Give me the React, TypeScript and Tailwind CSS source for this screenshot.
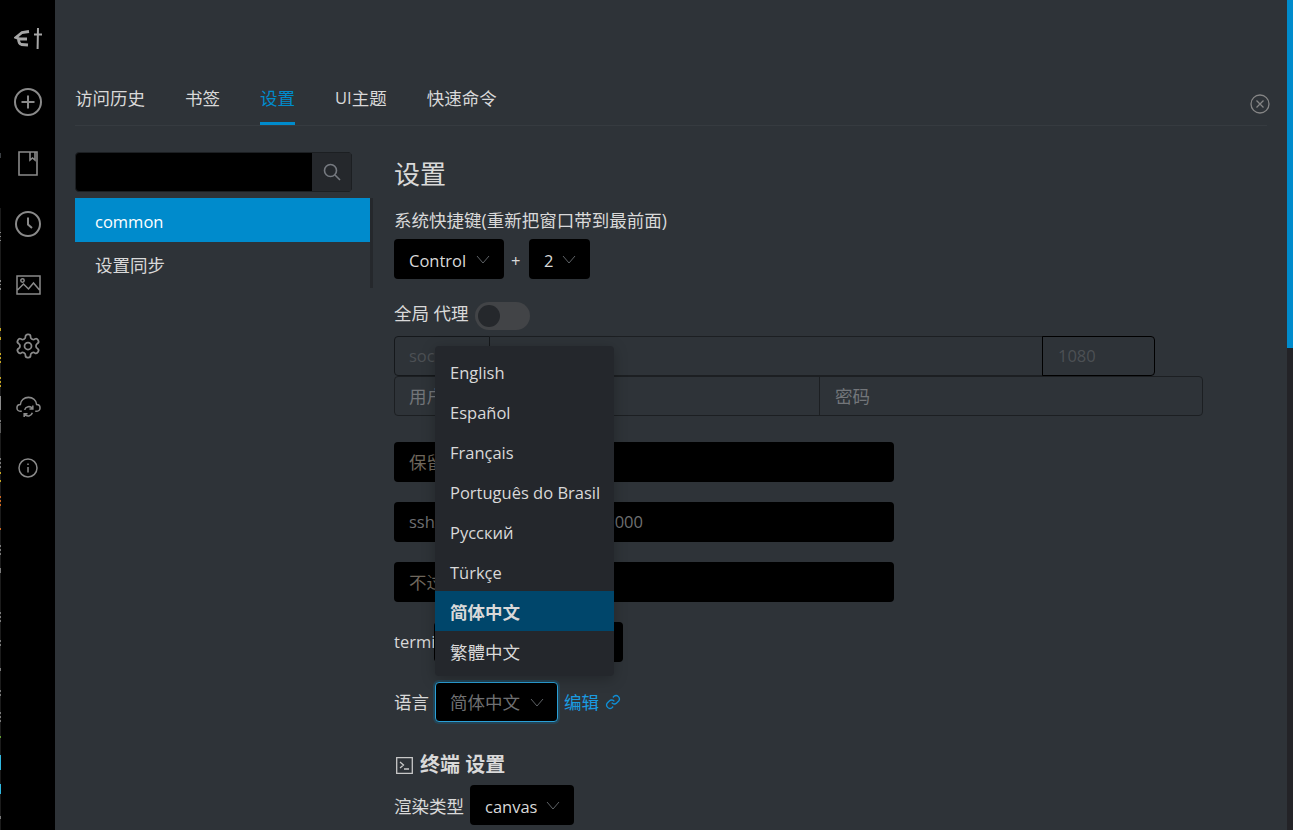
import React from "react";

const Chev = ({ c = "#5e6266" }: { c?: string }) => (
  <svg width="14" height="9" viewBox="0 0 14 9" fill="none" stroke={c} strokeWidth="1"><path d="M1 1l6 7 6-7" /></svg>
);

const ticks: [number, number, string][] = [
  [153, 5, "#3a3e42"], [208, 622, "#1b1b1b"], [232, 1, "#8a8a8a"], [236, 1, "#8a8a8a"], [240, 1, "#8a8a8a"],
  [280, 2, "#8a8a8a"], [284, 1, "#8a8a8a"], [288, 2, "#8a8a8a"], [328, 3, "#c8a820"], [337, 3, "#c8a820"],
  [353, 2, "#c8a820"], [357, 2, "#c8a820"], [361, 2, "#c8a820"], [377, 2, "#c8a820"], [381, 2, "#c8a820"], [385, 2, "#c8a820"],
  [396, 14, "#8a8a8a"], [420, 2, "#7a7a7a"], [423, 10, "#5a5a5a"], [458, 2, "#7a7a7a"], [462, 2, "#7a7a7a"], [466, 2, "#7a7a7a"],
  [472, 2, "#c8a820"], [480, 2, "#c8a820"], [496, 2, "#d06820"], [500, 2, "#d06820"], [504, 2, "#d06820"], [528, 2, "#d06820"],
  [545, 2, "#7a7a7a"], [549, 2, "#7a7a7a"], [553, 2, "#7a7a7a"], [568, 5, "#7a7a7a"], [612, 2, "#7a7a7a"], [616, 2, "#7a7a7a"], [620, 2, "#7a7a7a"],
  [640, 2, "#7a7a7a"], [644, 2, "#7a7a7a"], [668, 3, "#7a7a7a"], [690, 2, "#7a7a7a"], [694, 2, "#7a7a7a"], [712, 2, "#7a7a7a"], [716, 2, "#7a7a7a"], [720, 2, "#7a7a7a"],
  [736, 2, "#60a030"], [755, 15, "#30b8e0"], [784, 10, "#30b8e0"], [816, 3, "#7a7a7a"],
];

function NavIcon({ children }: { children: React.ReactNode }) {
  return <div className="flex items-center justify-center w-[55px] h-[61px] pl-px">{children}</div>;
}

function Sidebar() {
  const s = { fill: "none", stroke: "#8a8a8a", strokeWidth: 2 } as const;
  return (
    <div className="w-[55px] shrink-0 bg-black flex flex-col pt-[9px] relative">
      <div className="absolute left-0 top-0 w-px h-full">
        {ticks.map(([y, h, c]) => (
          <div key={y} className="absolute left-0 w-px" style={{ top: y, height: h, background: c }} />
        ))}
      </div>
      <div className="h-[62.5px] flex items-center justify-center pl-px pb-[3px]">
        <svg width="28" height="24" viewBox="0 0 28 24" fill="none" stroke="#a6a6a6" strokeWidth="2.800">
          <path d="M15 4.500 8 5.500 2 10.500l4 1.500h7M4.500 12c0 3.500 1.500 5 3 5.500l6.500.5" />
          <path d="M20 7.500h8M24 1l-.4 21" strokeWidth="2" />
        </svg>
      </div>
      <NavIcon>
        <svg width="28" height="28" viewBox="0 0 28 28" {...s}><circle cx="14" cy="14" r="13" /><path d="M14 7.500v13M7.500 14h13" /></svg>
      </NavIcon>
      <NavIcon>
        <svg width="20" height="25" viewBox="0 0 20 25" {...s} strokeWidth={1.6}><path d="M1 1h18v23H1zM12 1v8l2.500-2 2.500 2V1" /></svg>
      </NavIcon>
      <NavIcon>
        <svg width="26" height="26" viewBox="0 0 26 26" {...s}><circle cx="13" cy="13" r="12" /><path d="M13 6.500v7l4 3.500" /></svg>
      </NavIcon>
      <NavIcon>
        <svg width="25" height="20" viewBox="0 0 25 20" {...s} strokeWidth={1.5}><path d="M1 1h23v18H1zM1.500 15l6-6 5 5 5-6 6 7" /><circle cx="6.500" cy="5.500" r="1.700" /></svg>
      </NavIcon>
      <NavIcon>
        <svg width="28" height="28" viewBox="0 0 24 24" fill="none" stroke="#8a8a8a" strokeWidth="1.500"><path d="M12.220 2h-.440a2 2 0 0 0-2 2v.180a2 2 0 0 1-1 1.730l-.430.250a2 2 0 0 1-2 0l-.150-.080a2 2 0 0 0-2.730.730l-.220.380a2 2 0 0 0 .730 2.730l.150.100a2 2 0 0 1 1 1.720v.510a2 2 0 0 1-1 1.740l-.150.090a2 2 0 0 0-.730 2.730l.220.380a2 2 0 0 0 2.730.730l.150-.080a2 2 0 0 1 2 0l.430.250a2 2 0 0 1 1 1.730V20a2 2 0 0 0 2 2h.440a2 2 0 0 0 2-2v-.180a2 2 0 0 1 1-1.730l.430-.250a2 2 0 0 1 2 0l.150.080a2 2 0 0 0 2.730-.730l.220-.390a2 2 0 0 0-.730-2.730l-.150-.080a2 2 0 0 1-1-1.740v-.500a2 2 0 0 1 1-1.740l.150-.090a2 2 0 0 0 .730-2.730l-.220-.380a2 2 0 0 0-2.730-.730l-.150.080a2 2 0 0 1-2 0l-.430-.250a2 2 0 0 1-1-1.730V4a2 2 0 0 0-2-2z" /><circle cx="12" cy="12" r="3" /></svg>
      </NavIcon>
      <NavIcon>
        <svg width="25" height="22" viewBox="0 0 26 22" {...s} strokeWidth={1.6}><path d="M6 15.500H5C3 15.500 1 14 1 12s1.500-3.500 3.500-3.500C5 4 8.500 1 13 1s8 3 8.500 7.500c2 0 3.500 1.500 3.500 3.500s-2 3.500-4 3.500h-1" /><path d="M9 14a4.500 4.500 0 0 1 8-1.500M17 17a4.500 4.500 0 0 1-8 1.500M17.500 9.500V13H14M8.500 21.500V18H12" /></svg>
      </NavIcon>
      <NavIcon>
        <svg width="20" height="20" viewBox="0 0 20 20" {...s} strokeWidth={1.5}><circle cx="10" cy="10" r="9" /><path d="M10 9v5.500M10 5.500v1.500" /></svg>
      </NavIcon>
    </div>
  );
}

const tabs = ["访问历史", "书签", "设置", "UI主题", "快速命令"];
const langs = ["English", "Español", "Français", "Português do Brasil", "Русский", "Türkçe", "简体中文", "繁體中文"];
const latin = "text-[16.5px]";

function Sel({ label, w }: { label: string; w: string }) {
  return (
    <div className={`${w} h-10 bg-black rounded-sm flex items-center justify-between pl-[15px] pr-[14px] text-[#d9d9d9] ${latin}`}>
      <span className="pt-1">{label}</span>
      <Chev />
    </div>
  );
}

export default function App() {
  return (
    <div
      className="h-[830px] w-[1293px] flex overflow-hidden bg-[#2e3338] text-[17.5px] text-[#d9d9d9] relative leading-[24px]"
      style={{ fontFamily: '"Open Sans","Noto Sans CJK SC",sans-serif' }}
    >
      <Sidebar />
      <div className="flex-1 min-w-0 pl-5 pr-5 pt-[71px]">
        <div className="flex items-end h-[55px] border-b border-[#363b40]">
          <div className="flex gap-10">
            {tabs.map((t, i) => (
              <div key={t} className={`h-[55px] flex items-center ${i === 2 ? "text-[#008bcc] border-b-[3px] border-[#008bcc] pt-[3px]" : ""}`}>
                {i === 3 ? <><span className={latin}>UI</span>主题</> : t}
              </div>
            ))}
          </div>
          <div className="ml-auto mb-[11px] mr-[-3px]">
            <svg width="20" height="20" viewBox="0 0 20 20" fill="none" stroke="#858585" strokeWidth="1.300"><circle cx="10" cy="10" r="9" /><path d="M6.500 6.500l7 7M13.500 6.500l-7 7" /></svg>
          </div>
        </div>

        <div className="flex pt-[26px]">
          <div className="w-[298px] shrink-0 border-r-[3px] border-[#25282c] self-start h-[136px] relative">
            <div className="absolute -right-[3px] top-0 h-[46px] w-[3px] bg-[#2e3338]" />
            <div className="w-[277px] h-10 flex rounded-sm border border-[#1c1f22] bg-black">
              <div className="flex-1" />
              <div className="w-[39px] bg-[#25282c] flex items-center justify-center">
                <svg width="18" height="18" viewBox="0 0 18 18" fill="none" stroke="#767a80" strokeWidth="1.600"><circle cx="7.500" cy="7.500" r="6" /><path d="M12 12l5 5" /></svg>
              </div>
            </div>
            <div className={`mt-[6px] h-11 bg-[#008bcc] text-white pl-5 pt-1 flex items-center ${latin}`}>common</div>
            <div className="h-11 pl-5 pt-0.5 flex items-center">设置同步</div>
          </div>

          <div className="pl-[21px] flex-1 min-w-0">
            <h1 className="text-[26px] leading-[42px] text-[#d9d9d9] h-[42px] mt-px">设置</h1>
            <div className="mt-[13px] h-[24px] leading-[24px]">系统快捷键(重新把窗口带到最前面)</div>
            <div className="flex items-center mt-[7px]">
              <Sel label="Control" w="w-[110px]" />
              <span className={`mx-[7px] w-[11px] pt-1 ${latin}`}>+</span>
              <Sel label="2" w="w-[61px]" />
            </div>
            <div className="flex items-center mt-[23px] h-7">
              <span className="pb-[6px]">全局 代理</span>
              <div className="ml-[6px] w-[55px] h-7 rounded-full bg-[#424447] flex items-center pl-[3px]">
                <div className="w-[22px] h-[22px] rounded-full bg-[#25282c]" />
              </div>
            </div>
            <div className={`flex mt-[6px] w-[761px] h-10 ${latin}`}>
              <div className="w-[96px] border border-[#15181b] rounded-l-sm flex items-center pl-[14px] text-[#4c5054]">socks5</div>
              <div className="w-[554px] border-y border-r border-[#1c1f22] -ml-px" />
              <div className="w-[113px] border border-black rounded-r-sm flex items-center pl-[15px] text-[#4c5054] -ml-px">1080</div>
            </div>
            <div className="flex w-[809px] h-10 border border-[#1c1f22] rounded-sm">
              <div className="w-[425px] border-r border-[#1c1f22] flex items-center pl-[14px] text-[#73767a]">用户名</div>
              <div className="flex-1 flex items-center pl-[15px] text-[#73767a]">密码</div>
            </div>
            <div className="flex flex-col gap-5 mt-[26px]">
              <div className="w-[500px] h-10 bg-black rounded-sm flex items-center pl-[15px] text-[#6f675c]">保留</div>
              <div className={`w-[500px] h-10 bg-black rounded-sm flex items-center pl-[15px] text-[#6f7072] justify-between pr-[251px] ${latin}`}><span>ssh/</span><span>000</span></div>
              <div className="w-[500px] h-10 bg-black rounded-sm flex items-center pl-[15px] text-[#6f675c]">不过</div>
            </div>
            <div className="flex items-center mt-5 h-10">
              <span className={`${latin} w-[40px] whitespace-nowrap`}>termi</span>
              <div className="w-[189px] h-10 bg-black rounded-sm" />
            </div>
            <div className="flex items-center mt-5 h-10">
              <span>语言</span>
              <div className="ml-[6px] w-[123px] h-10 bg-black rounded-sm border border-[#2a9fd6] shadow-[0_0_0_2px_rgba(0,139,204,0.2)] flex items-center justify-between pl-[14px] pr-[13px] text-[#6f7072]">
                <span>简体中文</span>
                <Chev />
              </div>
              <span className="ml-[6px] text-[#1a9be0]">编辑</span>
              <svg className="ml-[6px]" width="16" height="16" viewBox="0 0 24 24" fill="none" stroke="#0f8fd6" strokeWidth="2"><path d="M10 13a5 5 0 0 0 7.500.500l3-3a5 5 0 0 0-7-7l-1.700 1.700" /><path d="M14 11a5 5 0 0 0-7.500-.500l-3 3a5 5 0 0 0 7 7l1.700-1.700" /></svg>
            </div>
            <div className="flex items-center mt-[31px] h-[24px] font-bold text-[20px] text-[#d9d9d9]">
              <svg className="mr-[7px] ml-[2px]" width="17" height="17" viewBox="0 0 17 17" fill="none" stroke="#c8c8c8" strokeWidth="1.300"><path d="M.7.700h15.600v15.600H.7zM4 5l3.500 3L4 11M8 12h5" /></svg>
              终端 设置
            </div>
            <div className="flex items-center mt-2">
              <span className="pt-0.5">渲染类型</span>
              <div className={`ml-[6px] w-[104px] h-10 bg-black rounded-sm flex items-center justify-between pl-[15px] pr-[14px] ${latin}`}>
                <span className="pt-1">canvas</span>
                <Chev />
              </div>
            </div>
          </div>
        </div>
      </div>

      <div className="w-[6px] shrink-0 bg-[#232327]">
        <div className="h-[348px] bg-[#008bcc]" />
      </div>

      <div className="absolute left-[435px] top-[346px] w-[179px] h-[330px] py-[5px] bg-[#24272c] rounded-sm shadow-[0_3px_14px_rgba(0,0,0,0.25)] overflow-hidden">
        {langs.map((l, i) => (
          <div key={l} className={`h-10 pl-[15px] flex items-center whitespace-nowrap ${i < 6 ? `${latin} pt-[3px]` : "pt-px"} ${l === "简体中文" ? "bg-[#00466b] font-bold" : ""}`}>{l}</div>
        ))}
      </div>
    </div>
  );
}
